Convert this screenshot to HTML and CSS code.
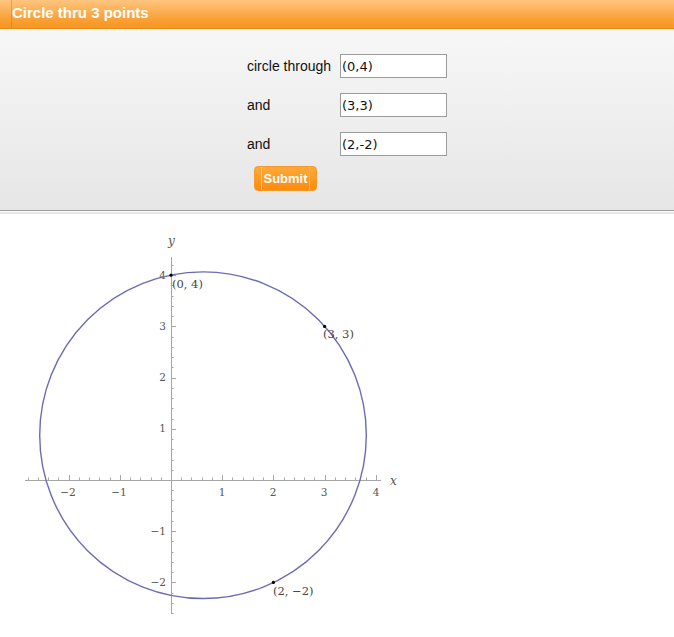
FILE: index.html
```html
<!DOCTYPE html>
<html>
<head>
<meta charset="utf-8">
<link rel="stylesheet" href="styles.css">
</head>
<body>
<div class="header"><span class="title">Circle thru 3 points</span></div>
<div class="panel">
  <div class="form">
    <label class="lbl">circle through</label><input class="inp" type="text" value="(0,4)">
    <label class="lbl">and</label><input class="inp" type="text" value="(3,3)">
    <label class="lbl">and</label><input class="inp" type="text" value="(2,-2)">
    <button class="btn" type="button"><span class="btn-in">Submit</span></button>
  </div>
</div>
<div class="sep"></div>
<svg class="plot" width="674" height="421" viewBox="0 0 674 421">
  <g id="axes" stroke="#a6a6a6" stroke-width="1"></g>
  <g class="ticklbl" font-family="DejaVu Serif, serif" font-size="10.5" fill="#555">
    <text x="68" y="282" text-anchor="middle">−2</text>
    <text x="119" y="282" text-anchor="middle">−1</text>
    <text x="222" y="282" text-anchor="middle">1</text>
    <text x="273" y="282" text-anchor="middle">2</text>
    <text x="324" y="282" text-anchor="middle">3</text>
    <text x="376" y="282" text-anchor="middle">4</text>
    <text x="166" y="65" text-anchor="end">4</text>
    <text x="166" y="116" text-anchor="end">3</text>
    <text x="166" y="167" text-anchor="end">2</text>
    <text x="166" y="218" text-anchor="end">1</text>
    <text x="166" y="321" text-anchor="end">−1</text>
    <text x="166" y="372" text-anchor="end">−2</text>
  </g>
  <g font-family="DejaVu Serif, serif" font-size="12" font-style="italic" fill="#555">
    <text x="390" y="271">x</text>
    <text x="168" y="31">y</text>
  </g>
  <circle cx="203" cy="221.2" r="163.3" fill="none" stroke="#6b6bb5" stroke-width="1.4"/>
  <g fill="#000">
    <circle cx="171" cy="61.2" r="1.6"/>
    <circle cx="324.6" cy="112.4" r="1.6"/>
    <circle cx="273.4" cy="368.4" r="1.6"/>
  </g>
  <g font-family="DejaVu Serif, serif" font-size="11.5" fill="#444">
    <text x="172" y="74">(0, 4)</text>
    <text x="323" y="124">(3, 3)</text>
    <text x="273" y="381">(2, −2)</text>
  </g>
</svg>
<script>
(function(){
  var g=document.getElementById('axes');
  var ox=171, oy=266, s=51.2, ns='http://www.w3.org/2000/svg';
  function ln(x1,y1,x2,y2){var l=document.createElementNS(ns,'line');l.setAttribute('x1',x1);l.setAttribute('y1',y1);l.setAttribute('x2',x2);l.setAttribute('y2',y2);g.appendChild(l);}
  ln(25,oy+0.5,381,oy+0.5);
  ln(ox+0.5,43,ox+0.5,399);
  for(var i=-14;i<=20;i++){var x=Math.round(ox+i*s/5)+0.5;var m=(i%5===0);if(i===0)continue;ln(x,oy,x,oy-(m?5:2.5));}
  for(var j=-13;j<=21;j++){var y=Math.round(oy-j*s/5)+0.5;var mj=(j%5===0);if(j===0)continue;ln(ox,y,ox+(mj?5:2.5),y);}
})();
</script>
</body>
</html>
```
FILE: styles.css
```css
html, body {
  margin: 0;
  padding: 0;
  background: #fff;
  font-family: "Liberation Sans", Arial, sans-serif;
}
.header {
  height: 28px;
  background: linear-gradient(#ffc57f, #f9a035 70%, #f8961f);
  border-bottom: 1px solid #e58a17;
  display: flex;
  align-items: stretch;
}
.title {
  margin-left: 11px;
  border-left: 1px solid rgba(205, 120, 30, 0.45);
  padding-left: 0;
  color: #fff;
  font-weight: bold;
  font-size: 15px;
  line-height: 26px;
}
.panel {
  background: linear-gradient(#f7f7f7, #e6e6e6);
  border-bottom: 1px solid #9a9a9a;
  padding: 25px 0 20px 247px;
  height: 136px;
}
.form {
  display: grid;
  grid-template-columns: 93px 107px;
  row-gap: 15px;
  align-items: center;
}
.lbl {
  font-size: 14px;
  color: #111;
}
.inp {
  box-sizing: border-box;
  width: 107px;
  height: 24px;
  margin: 0;
  border: 1px solid #9c9c9c;
  background: #fff;
  padding: 0 0 0 1px;
  font-family: "DejaVu Sans", sans-serif;
  font-size: 13px;
  color: #111;
  outline: none;
}
.btn {
  grid-column: 1 / 2;
  justify-self: start;
  margin: -5px 0 0 7px;
  width: 63px;
  height: 25px;
  border: 1px solid #f39a2a;
  border-radius: 4px;
  background: linear-gradient(#ffa93a, #fb8b0c);
  padding: 0;
  display: flex;
  align-items: stretch;
  justify-content: center;
}
.btn-in {
  border-left: 1px solid rgba(255, 225, 180, 0.8);
  border-right: 1px solid rgba(255, 200, 140, 0.6);
  padding: 0 1px;
  color: #fff;
  font-family: "Liberation Sans", Arial, sans-serif;
  font-weight: bold;
  font-size: 13px;
  line-height: 23px;
}
.sep {
  height: 1px;
  background: #fff;
  border-bottom: 2px solid #e6e6e6;
}
.plot {
  display: block;
}
```
